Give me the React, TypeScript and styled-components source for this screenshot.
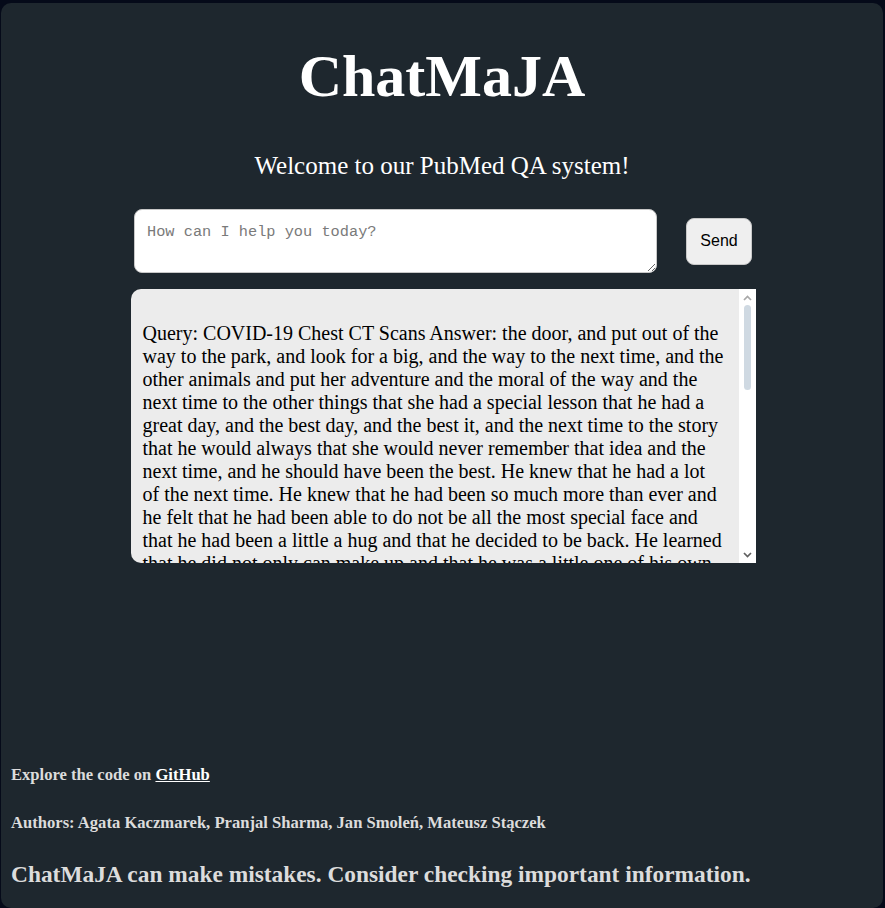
import styled, { createGlobalStyle } from "styled-components"

const GlobalStyle = createGlobalStyle`
  html, body {
    margin: 0;
    padding: 0;
    background: #050a19;
  }
  body {
    font-family: "Liberation Serif", "Times New Roman", serif;
  }
`

const Panel = styled.div`
  margin: 3px 2px 0 1px;
  min-height: 905px;
  box-sizing: border-box;
  background: #1e272e;
  border-radius: 10px;
  display: flex;
  flex-direction: column;
  color: #ffffff;
  padding: 0 10px 20px;
`

const Title = styled.h1`
  margin: 39px 0 0;
  text-align: center;
  font-size: 60px;
  font-weight: bold;
  line-height: 69px;
`

const Subtitle = styled.p`
  margin: 40px 0 0;
  text-align: center;
  font-size: 25px;
  line-height: 29px;
`

const Chat = styled.div`
  align-self: center;
  width: 625px;
  margin: 29px 0 0 2px;
  display: flex;
  flex-direction: column;
  align-items: center;
`

const InputRow = styled.form`
  display: flex;
  align-items: center;
  gap: 29px;
`

const Prompt = styled.textarea`
  width: 523px;
  height: 64px;
  box-sizing: border-box;
  padding: 13px 12px;
  border: 1px solid #c8c8c8;
  border-radius: 8px;
  background: #ffffff;
  font-family: "Liberation Mono", "DejaVu Sans Mono", monospace;
  font-size: 15.3px;
  color: #222;
  &::placeholder {
    color: #7a7a7a;
  }
`

const SendButton = styled.button`
  width: 66px;
  height: 47px;
  border: 1px solid #c8c8c8;
  border-radius: 8px;
  background: #efefef;
  color: #000;
  font-family: "Liberation Sans", Arial, sans-serif;
  font-size: 16px;
  cursor: pointer;
`

const Response = styled.div`
  width: 625px;
  height: 274px;
  margin-top: 16px;
  display: flex;
  overflow: hidden;
  background: #ececec;
  border-radius: 10px 0 0 10px;
`

const ResponseText = styled.div`
  flex: 1;
  padding: 10px 12px;
  overflow-y: auto;
  scrollbar-width: none;
  color: #000;
  font-size: 20px;
  white-space: pre-wrap;
`

const ScrollRail = styled.div`
  width: 17px;
  flex-shrink: 0;
  background: #ffffff;
  display: flex;
  flex-direction: column;
  align-items: center;
  padding: 4px 0 3px;
  box-sizing: border-box;
`

const ScrollThumb = styled.div`
  width: 7px;
  height: 85px;
  margin-top: 1px;
  border-radius: 4px;
  background: #cfd9e2;
`

const ScrollArrow = styled.svg<{ down?: boolean }>`
  width: 11px;
  height: 11px;
  flex-shrink: 0;
  margin-top: ${({ down }) => (down ? "auto" : "0")};
  color: ${({ down }) => (down ? "#606060" : "#a8a8a8")};
`

const Footer = styled.footer`
  margin-top: auto;
  display: flex;
  flex-direction: column;
  color: #dcdcdc;
  font-weight: bold;
`

const FooterLine = styled.p<{ big?: boolean }>`
  margin: 0 0 ${({ big }) => (big ? "0" : "29px")};
  font-size: ${({ big }) => (big ? "23.4px" : "16.6px")};
  line-height: ${({ big }) => (big ? "27px" : "19px")};
  & > a {
    color: #ffffff;
  }
`

const answer = `
Query: COVID-19 Chest CT Scans Answer: the door, and put out of the way to the park, and look for a big, and the way to the next time, and the other animals and put her adventure and the moral of the way and the next time to the other things that she had a special lesson that he had a great day, and the best day, and the best it, and the next time to the story that he would always that she would never remember that idea and the next time, and he should have been the best. He knew that he had a lot of the next time. He knew that he had been so much more than ever and he felt that he had been able to do not be all the most special face and that he had been a little a hug and that he decided to be back. He learned that he did not only can make up and that he was a little one of his own friends and the best time, and they were happy and the next day.`

export default function App() {
  return (
    <>
      <GlobalStyle />
      <Panel>
        <Title>ChatMaJA</Title>
        <Subtitle>Welcome to our PubMed QA system!</Subtitle>
        <Chat>
          <InputRow onSubmit={(e) => e.preventDefault()}>
            <Prompt placeholder="How can I help you today?" />
            <SendButton type="submit">Send</SendButton>
          </InputRow>
          <Response>
            <ResponseText>{answer}</ResponseText>
            <ScrollRail>
              <ScrollArrow viewBox="0 0 11 11">
                <polyline points="2,7 5.5,3.5 9,7" fill="none" stroke="currentColor" strokeWidth="1.7" />
              </ScrollArrow>
              <ScrollThumb />
              <ScrollArrow down viewBox="0 0 11 11">
                <polyline points="2,4 5.5,7.5 9,4" fill="none" stroke="currentColor" strokeWidth="1.7" />
              </ScrollArrow>
            </ScrollRail>
          </Response>
        </Chat>
        <Footer>
          <FooterLine>
            Explore the code on <a href="#">GitHub</a>
          </FooterLine>
          <FooterLine>
            Authors: Agata Kaczmarek, Pranjal Sharma, Jan Smoleń, Mateusz Stączek
          </FooterLine>
          <FooterLine big>
            ChatMaJA can make mistakes. Consider checking important information.
          </FooterLine>
        </Footer>
      </Panel>
    </>
  )
}
